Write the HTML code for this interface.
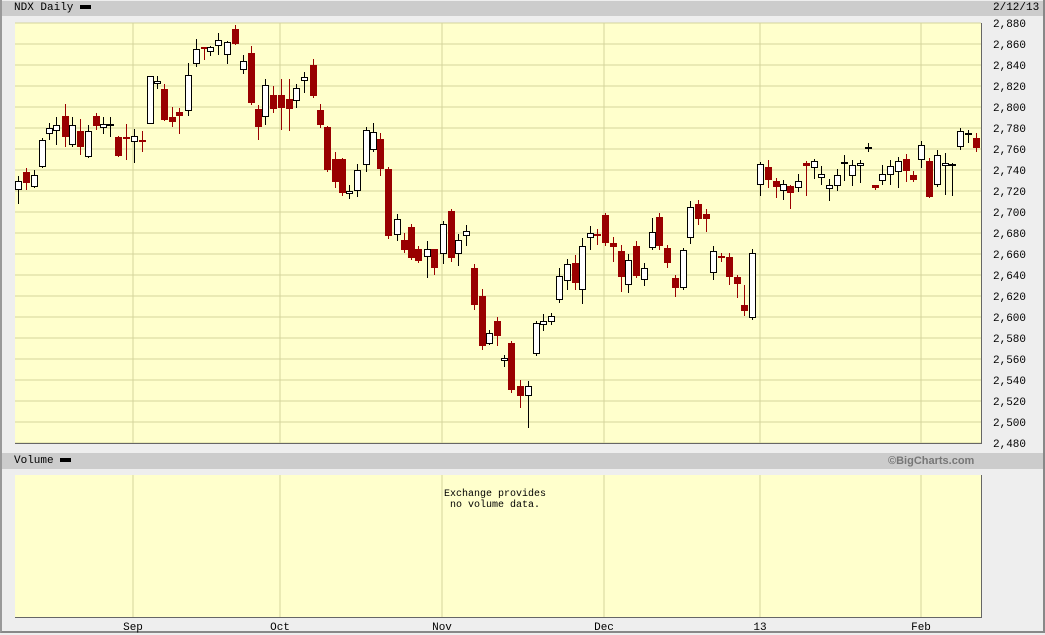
<!DOCTYPE html>
<html><head><style>
body{margin:0;width:1045px;height:635px;background:#eeeeee;overflow:hidden;font-family:"Liberation Mono",monospace;font-size:11px;position:relative}
.frame{position:absolute;left:0;top:0;width:1041px;height:631px;border:2px solid #888;border-top:0;border-left:2px solid #999}
.bar{position:absolute;left:2px;width:1041px;height:15px;background:#cccccc}
.t{position:absolute;color:#000;white-space:pre}
</style></head><body>
<div class="frame"></div>
<div class="bar" style="top:1px"></div>
<div class="t" style="left:14px;top:2px">NDX Daily <span style="display:inline-block;width:11px;height:4px;background:#000;vertical-align:middle"></span></div>
<div class="t" style="left:993px;top:2px">2/12/13</div>
<div class="bar" style="top:453px;height:16px"></div>
<div class="t" style="left:14px;top:455px">Volume <span style="display:inline-block;width:11px;height:4px;background:#000;vertical-align:middle"></span></div>
<div class="t" style="left:888px;top:455px;color:#777;font-family:'Liberation Sans',sans-serif;font-weight:bold;font-size:11px">©BigCharts.com</div>
<svg id="s" width="1045" height="635" style="position:absolute;left:0;top:0"></svg>
<div class="t" style="left:444px;top:489px;font-size:10px;line-height:11px">Exchange provides
 no volume data.</div>
<script>
var s=document.getElementById('s'),h='';
h+='<rect x="15" y="23" width="966" height="420" fill="#ffffcc"/>';
h+='<rect x="15" y="475" width="966" height="142" fill="#ffffcc"/>';
for(var i=0;i<=20;i++){var y=23+i*21;h+='<line x1="15" x2="981" y1="'+y+'" y2="'+y+'" stroke="#d4d49c"/>';
var v=2880-i*20;h+='<text x="993" y="'+(y+4)+'" font-size="11" font-family="Liberation Mono">'+(v+'').replace(/(\d)(\d{3})$/,'$1,$2')+'</text>';}
var vx=[133,280,442,604,760,921],lb=['Sep','Oct','Nov','Dec','13','Feb'];
vx.forEach(function(x,k){h+='<line x1="'+x+'" x2="'+x+'" y1="23" y2="443" stroke="#d4d49c"/><line x1="'+x+'" x2="'+x+'" y1="475" y2="617" stroke="#d4d49c"/>';
h+='<text x="'+x+'" y="630" text-anchor="middle" font-size="11" font-family="Liberation Mono">'+lb[k]+'</text>';});
h+='<line x1="15" x2="981" y1="443.5" y2="443.5" stroke="#666"/><line x1="981.5" x2="981.5" y1="23" y2="444" stroke="#666"/>';
h+='<line x1="15" x2="981" y1="617.5" y2="617.5" stroke="#666"/><line x1="981.5" x2="981.5" y1="475" y2="618" stroke="#666"/>';
var c=[[18,'w',181,190,176,204],[26,'r',172,183,168,190],[34,'w',175,187,170,188],[42,'w',140,167,138,168],[49,'w',128,134,123,140],[56,'w',125,131,117,145],[65,'r',116,137,104,147],[72,'w',125,145,117,147],[80,'r',131,147,119,155],[88,'w',131,157,125,158],[96,'r',116,126,113,130],[103,'w',124,128,117,134],[110,'w',124,126,117,137],[118,'r',137,156,136,157],[126,'r',137,139,124,160],[134,'w',136,142,129,163],[142,'r',140,142,131,152],[150,'w',76,124,76,124],[157,'w',81,84,76,89],[164,'r',89,120,84,121],[172,'r',117,122,107,127],[179,'r',112,116,108,134],[188,'w',75,111,63,116],[196,'w',49,64,39,67],[204,'r',47,49,47,60],[210,'w',47,52,46,56],[218,'w',40,46,33,55],[227,'w',42,55,41,64],[235,'r',29,44,25,45],[243,'w',61,70,55,74],[251,'r',53,103,46,105],[258,'r',109,127,105,140],[265,'w',85,117,79,125],[273,'r',95,109,86,113],[281,'r',95,108,79,130],[289,'r',99,109,79,131],[296,'w',88,101,84,108],[304,'w',77,81,72,93],[313,'r',65,96,59,98],[320,'r',110,125,104,128],[327,'r',127,170,126,172],[335,'r',159,182,152,188],[342,'r',159,193,158,196],[349,'w',191,194,185,199],[357,'w',170,191,164,197],[366,'w',130,165,127,172],[373,'w',132,150,123,152],[380,'r',139,169,133,176],[388,'r',169,236,167,239],[397,'w',219,235,214,241],[404,'r',240,250,233,253],[411,'r',227,258,224,260],[418,'r',249,261,246,263],[427,'w',249,257,241,278],[434,'r',249,268,249,275],[443,'w',224,254,221,264],[451,'r',211,258,209,262],[458,'w',240,254,234,266],[466,'w',231,236,225,246],[474,'r',268,305,264,310],[482,'r',296,346,289,350],[489,'w',333,344,330,345],[497,'r',321,336,317,346],[504,'w',358,361,355,367],[511,'r',343,390,341,393],[520,'r',386,396,380,408],[528,'w',386,396,381,428],[536,'w',323,354,321,356],[543,'w',321,325,314,331],[551,'w',316,322,313,325],[559,'w',276,300,268,303],[567,'w',264,281,259,290],[575,'r',263,283,255,290],[582,'w',246,290,238,304],[590,'w',233,238,226,250],[597,'r',234,236,229,245],[605,'r',215,243,213,246],[613,'r',243,247,237,262],[621,'r',251,277,245,292],[628,'w',260,285,254,293],[636,'r',246,276,241,278],[644,'w',268,280,263,286],[652,'w',232,248,218,250],[659,'r',217,246,213,250],[667,'r',248,263,245,268],[675,'r',278,288,275,297],[683,'w',250,288,248,290],[690,'w',207,238,201,244],[698,'r',204,219,200,225],[706,'r',214,219,209,232],[713,'w',251,273,246,280],[721,'r',256,258,253,262],[729,'r',257,277,253,285],[737,'r',277,284,275,298],[744,'r',305,311,285,316],[752,'w',253,318,249,320],[760,'w',164,185,162,196],[768,'r',167,180,160,188],[776,'r',181,187,178,198],[783,'w',184,191,180,200],[790,'r',186,193,185,209],[798,'w',181,188,174,192],[806,'r',163,166,161,196],[814,'w',161,168,159,179],[821,'w',174,178,166,185],[829,'w',185,189,179,201],[837,'w',175,186,169,191],[844,'w',162,164,155,181],[852,'w',165,176,160,186],[860,'w',163,166,160,183],[868,'w',147,149,143,152],[875,'r',185,188,185,190],[882,'w',174,181,165,185],[890,'w',166,175,160,185],[898,'w',161,172,157,188],[906,'r',159,171,154,182],[913,'r',175,180,171,182],[921,'w',145,160,141,168],[929,'r',161,197,158,198],[937,'w',155,185,150,187],[945,'w',163,166,153,195],[952,'w',164,165,163,196],[960,'w',131,147,128,150],[968,'w',133,134,130,143],[976,'r',138,148,133,152]];
c.forEach(function(d){var x=d[0],r=d[1]=='r',col=r?'#990000':'#000';
h+='<line x1="'+(x+.5)+'" x2="'+(x+.5)+'" y1="'+d[4]+'" y2="'+d[5]+'" stroke="'+col+'"/>';
if(r)h+='<rect x="'+(x-3)+'" y="'+d[2]+'" width="7" height="'+Math.max(2,d[3]-d[2])+'" fill="#990000"/>';
else h+='<rect x="'+(x-2.5)+'" y="'+(d[2]+.5)+'" width="6" height="'+Math.max(1,d[3]-d[2]-1)+'" fill="#fff" stroke="#000"/>';});
s.innerHTML=h;
</script>
</body></html>
